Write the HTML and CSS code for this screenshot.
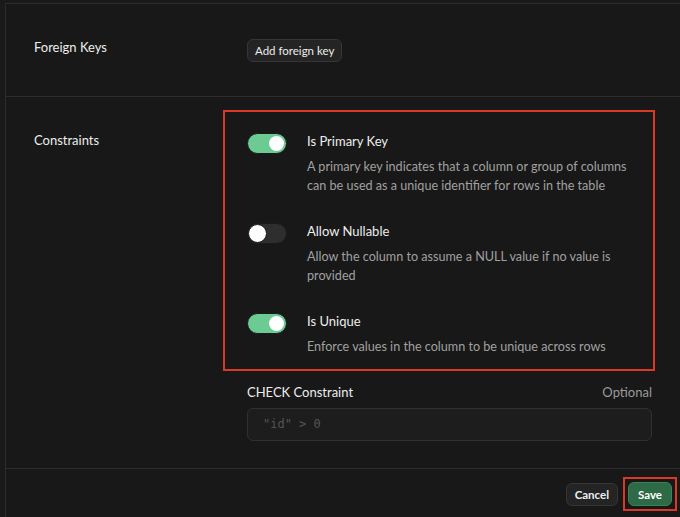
FILE: index.html
```html
<!DOCTYPE html>
<html>
<head>
<meta charset="utf-8">
<link rel="stylesheet" href="styles.css">
</head>
<body>
<div class="panel">
  <section class="row row-fk">
    <div class="label">Foreign Keys</div>
    <div class="content">
      <button class="btn btn-default">Add foreign key</button>
    </div>
  </section>
  <section class="row row-constraints">
    <div class="label label-constraints">Constraints</div>
    <div class="content">
      <div class="highlight">
        <div class="opt">
          <span class="toggle on"><span class="knob"></span></span>
          <div class="opt-text">
            <div class="opt-title">Is Primary Key</div>
            <div class="opt-desc">A primary key indicates that a column or group of columns can be used as a unique identifier for rows in the table</div>
          </div>
        </div>
        <div class="opt">
          <span class="toggle"><span class="knob"></span></span>
          <div class="opt-text">
            <div class="opt-title">Allow Nullable</div>
            <div class="opt-desc">Allow the column to assume a NULL value if no value is provided</div>
          </div>
        </div>
        <div class="opt">
          <span class="toggle on"><span class="knob"></span></span>
          <div class="opt-text">
            <div class="opt-title">Is Unique</div>
            <div class="opt-desc">Enforce values in the column to be unique across rows</div>
          </div>
        </div>
      </div>
      <div class="field">
        <div class="field-head">
          <span class="field-label">CHECK Constraint</span>
          <span class="field-opt">Optional</span>
        </div>
        <div class="input">"id" &gt; 0</div>
      </div>
    </div>
  </section>
  <footer class="footer">
    <button class="btn btn-default">Cancel</button>
    <span class="mark"><button class="btn btn-primary">Save</button></span>
  </footer>
</div>
</body>
</html>
```
FILE: styles.css
```css
html, body {
  margin: 0;
  padding: 0;
  background: #1a1a1a;
  height: 100%;
}
body {
  font-family: "Lato", "Noto Sans", sans-serif;
  font-size: 13px;
  color: #ededed;
  overflow: hidden;
}
.panel {
  margin-left: 5px;
  margin-top: 3px;
  border-left: 1px solid #2c2c2c;
  border-top: 1px solid #2c2c2c;
  height: calc(100% - 3px);
  box-sizing: border-box;
  background: #181818;
}
.row {
  display: grid;
  grid-template-columns: 213px 405px;
  padding-left: 28px;
}
.row-fk {
  height: 93px;
  padding-top: 33px;
  box-sizing: border-box;
  border-bottom: 1px solid #2c2c2c;
}
.label {
  line-height: 20px;
  font-size: 13px;
  color: #ededed;
}
.row-fk .btn {
  margin-top: 2px;
}
.btn {
  font-family: inherit;
  font-size: 11.5px;
  height: 23px;
  padding: 0 7px;
  border-radius: 6px;
  line-height: 21px;
  cursor: pointer;
}
.btn-default {
  background: #242424;
  border: 1px solid #363636;
  color: #ededed;
}
.btn-primary {
  height: 24px;
  background: #2d6a45;
  border: 1px solid #3a8355;
  color: #ffffff;
  font-weight: 700;
  padding: 0 9px;
}
.footer .btn-default {
  font-weight: 700;
  padding: 0 8px;
}
.mark {
  display: inline-flex;
  border: 2px solid #d93a26;
  padding: 3px;
}
.row-constraints {
  padding-top: 13px;
  padding-bottom: 27px;
  border-bottom: 1px solid #2c2c2c;
}
.label-constraints {
  padding-top: 20px;
}
.highlight {
  margin-left: -24px;
  width: 432px;
  box-sizing: border-box;
  border: 2px solid #d93a26;
  padding: 19px 22px 13px 22px;
}
.opt {
  display: flex;
  gap: 20px;
  margin-bottom: 26px;
}
.opt:last-child {
  margin-bottom: 0;
}
.toggle {
  flex: none;
  width: 40px;
  height: 21px;
  border-radius: 11px;
  background: #2e2e2e;
  box-sizing: border-box;
  border: 1px solid #1a1a1a;
  position: relative;
  margin-top: 2px;
}
.toggle .knob {
  position: absolute;
  top: 2px;
  left: 2px;
  width: 15px;
  height: 15px;
  border-radius: 50%;
  background: #ffffff;
}
.toggle.on {
  background: #6ccb93;
}
.toggle.on .knob {
  left: 21px;
}
.toggle:not(.on) .knob {
  top: 0;
  left: 0;
  width: 19px;
  height: 19px;
  box-sizing: border-box;
  border: 1px solid #1a1a1a;
}
.opt-title {
  line-height: 20px;
  font-size: 13px;
  color: #ededed;
}
.opt-desc {
  margin-top: 6px;
  line-height: 19px;
  color: #a0a0a0;
  font-size: 12.6px;
}
.field {
  margin-top: 11px;
}
.field-head {
  display: flex;
  justify-content: space-between;
  line-height: 20px;
  font-size: 13px;
}
.field-label {
  color: #ededed;
}
.field-opt {
  color: #9a9a9a;
}
.input {
  margin-top: 6px;
  height: 33px;
  box-sizing: border-box;
  border: 1px solid #303030;
  border-radius: 6px;
  background: #1d1d1d;
  font-family: "DejaVu Sans Mono", monospace;
  font-size: 12px;
  color: #555555;
  padding-left: 15px;
  line-height: 31px;
}
.footer {
  display: flex;
  justify-content: flex-end;
  align-items: center;
  gap: 5px;
  padding: 8px 3px 0 0;
}
```
